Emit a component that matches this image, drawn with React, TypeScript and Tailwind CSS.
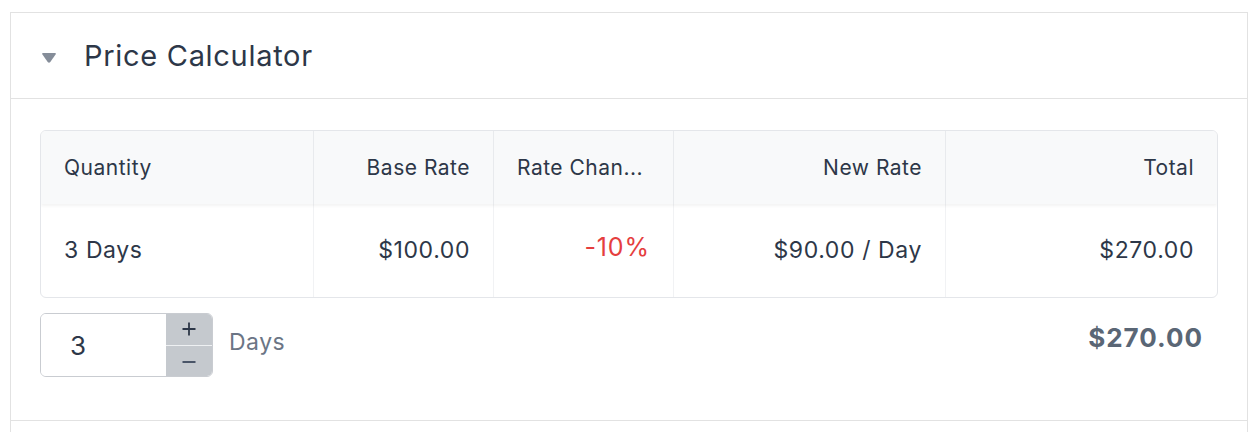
import React from "react";

const font = { fontFamily: "Inter, 'Noto Sans', sans-serif" };

export default function App() {
  return (
    <div className="w-[1256px] h-[432px] bg-white overflow-hidden pt-[12px] pl-[10px] pr-[8px]" style={font}>
      <div className="border-l border-r border-t border-[#e2e2e2] h-[440px]">
        {/* Header */}
        <div className="h-[86px] border-b border-[#e2e2e2] flex items-center pl-[30px]">
          <svg width="16" height="12" viewBox="0 0 14 11" className="mt-[5px]">
            <path d="M1.5 1 H12.5 Q13.8 1 13 2.3 L8.2 9.2 Q7 10.6 5.8 9.2 L1 2.3 Q0.2 1 1.5 1 Z" fill="#858d99" />
          </svg>
          <span className="ml-[27px] text-[29px] text-[#2d3748] tracking-[0.7px]">Price Calculator</span>
        </div>
        {/* Body */}
        <div className="h-[322px] border-b border-[#e2e2e2] pt-[31px] px-[29px]">
          <div className="border border-[#e4e6ea] rounded-[6px] overflow-hidden">
            <div className="grid grid-cols-[272px_180px_180px_272px_1fr] bg-[#f8f9fa] h-[73px] shadow-[0_2px_3px_rgba(0,0,0,0.05)] relative text-[21px] tracking-[0.5px] text-[#2d3748]">
              <div className="flex items-center px-[23px]">Quantity</div>
              <div className="flex items-center justify-end px-[23px] border-l border-[#e8eaed]">Base Rate</div>
              <div className="flex items-center px-[23px] border-l border-[#e8eaed] whitespace-nowrap overflow-hidden">Rate Chan...</div>
              <div className="flex items-center justify-end px-[23px] border-l border-[#e8eaed]">New Rate</div>
              <div className="flex items-center justify-end px-[23px] border-l border-[#e8eaed]">Total</div>
            </div>
            <div className="grid grid-cols-[272px_180px_180px_272px_1fr] h-[93px] text-[23px] tracking-[0.6px] text-[#2d3748]">
              <div className="flex items-center px-[23px]">3 Days</div>
              <div className="flex items-center justify-end px-[23px] border-l border-[#f1f2f4]">$100.00</div>
              <div className="flex items-center justify-end px-[23px] border-l border-[#f1f2f4] text-[25px] tracking-[0.9px] text-[#e53e3e] pb-[6px]">-10%</div>
              <div className="flex items-center justify-end px-[23px] border-l border-[#f1f2f4]">$90.00 / Day</div>
              <div className="flex items-center justify-end px-[23px] border-l border-[#f1f2f4]">$270.00</div>
            </div>
          </div>
          <div className="flex items-center mt-[15px]">
            <div className="flex w-[173px] h-[64px] border border-[#c9ccd1] rounded-[6px] overflow-hidden">
              <div className="flex-1 flex items-center pl-[29px] text-[26px] text-[#2d3748] bg-white">3</div>
              <div className="w-[46px] flex flex-col bg-[#c5c9ce]">
                <div className="flex-1 flex items-center justify-center border-b border-[#eef0f2]">
                  <svg width="16" height="16" viewBox="0 0 16 16"><path d="M8 1.5V14.5M1.5 8H14.5" stroke="#2d3748" strokeWidth="1.8" /></svg>
                </div>
                <div className="flex-1 flex items-center justify-center">
                  <svg width="16" height="16" viewBox="0 0 16 16"><path d="M1.5 9H14.5" stroke="#4a5568" strokeWidth="1.8" /></svg>
                </div>
              </div>
            </div>
            <span className="ml-[16px] mb-[5px] text-[23px] tracking-[0.5px] text-[#6b7585]">Days</span>
            <span className="ml-auto mr-[15px] mb-[16px] text-[26px] tracking-[1px] font-bold text-[#5a6675]">$270.00</span>
          </div>
        </div>
      </div>
    </div>
  );
}
